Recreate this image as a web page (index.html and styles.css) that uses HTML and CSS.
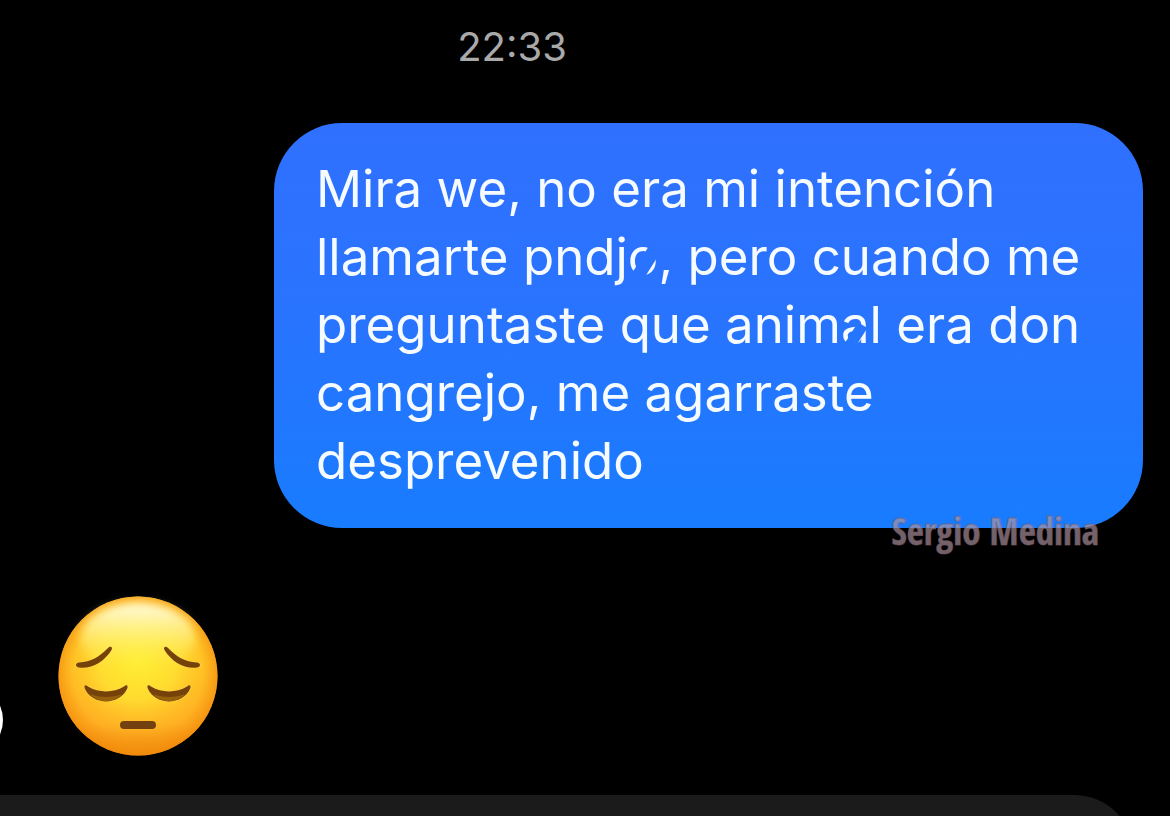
FILE: index.html
```html
<!DOCTYPE html>
<html lang="es">
<head>
<meta charset="utf-8">
<meta name="viewport" content="width=device-width, initial-scale=1">
<title>Chat</title>
<link rel="stylesheet" href="styles.css">
</head>
<body>
<main class="chat">
  <time class="stamp" datetime="22:33">22:33</time>
  <section class="sent">
    <p class="bubble">Mira we, no era mi intención<br>llamarte pndj<span class="cut cut-wide">o</span>, pero cuando me<br>preguntaste que anim<span class="cut cut-low">a</span>l era don<br>cangrejo, me agarraste<br>desprevenido</p>
    <span class="signature">Sergio Medina</span>
  </section>
  <section class="received">
    <span class="avatar"></span>
    <svg class="emoji" viewBox="0 0 160 160" role="img" aria-label="Cara pensativa">
      <defs>
        <linearGradient id="base" x1="0" y1="0" x2="0" y2="1">
          <stop offset="0" stop-color="#ffc22c"/>
          <stop offset=".45" stop-color="#ffbd23"/>
          <stop offset=".8" stop-color="#ffac22"/>
          <stop offset="1" stop-color="#f08b0c"/>
        </linearGradient>
        <radialGradient id="glow" cx=".5" cy=".4" r=".5">
          <stop offset="0" stop-color="#ffee32"/>
          <stop offset=".5" stop-color="#ffe132" stop-opacity=".85"/>
          <stop offset="1" stop-color="#ffc627" stop-opacity="0"/>
        </radialGradient>
        <radialGradient id="rim" cx=".5" cy=".48" r=".52">
          <stop offset=".78" stop-color="#f79a13" stop-opacity="0"/>
          <stop offset="1" stop-color="#f28a0b" stop-opacity=".85"/>
        </radialGradient>
        <linearGradient id="shine" x1="0" y1="0" x2="0" y2="1">
          <stop offset="0" stop-color="#fffce6"/>
          <stop offset=".5" stop-color="#fff68a" stop-opacity=".6"/>
          <stop offset="1" stop-color="#fff03c" stop-opacity="0"/>
        </linearGradient>
        <filter id="soft" x="-20%" y="-20%" width="140%" height="140%"><feGaussianBlur stdDeviation="4"/></filter>
      </defs>
      <circle cx="80" cy="80" r="79.5" fill="url(#base)"/>
      <circle cx="80" cy="80" r="79.5" fill="url(#glow)"/>
      <circle cx="80" cy="80" r="79.5" fill="url(#rim)"/>
      <ellipse cx="80" cy="42" rx="57" ry="35" fill="url(#shine)" filter="url(#soft)"/>
      <g fill="#754309" stroke="#ffd957" stroke-width="1" paint-order="stroke">
        <path d="M50 52C41 61 33 66 21 66.500C17 67 17 71 21 71.500C34 73 46 66 53.500 54C55 51 52.500 49.500 50 52Z"/>
        <path d="M110 52C119 61 127 66 139 66.500C143 67 143 71 139 71.500C126 73 114 66 106.500 54C105 51 107.500 49.500 110 52Z"/>
        <path d="M30 90.500C41 97 55 97 66 90.500C69 88 70.500 90 69 93C61 109.500 35 109.500 27 93C25.500 90 27 88 30 90.500Z"/>
        <path d="M93 90.500C104 97 118 97 129 90.500C132 88 133.500 90 132 93C124 109.500 98 109.500 90 93C88.500 90 90 88 93 90.500Z"/>
      </g>
      <path d="M32 98C40 107.500 56 107.500 64 98C55 102 41 102 32 98ZM95 98C103 107.500 119 107.500 127 98C118 102 104 102 95 98Z" fill="#97610c"/>
      <rect x="62" y="125" width="36" height="8" rx="4" fill="#73400f"/>
    </svg>
  </section>
  <footer class="composer"><input class="field" type="text" aria-label="Mensaje"></footer>
</main>
</body>
</html>
```

FILE: styles.css
```css
* { box-sizing: border-box; }

body {
  margin: 0;
  background: #000;
  font-family: Inter, "Liberation Sans", sans-serif;
}

.chat {
  display: flex;
  flex-direction: column;
  min-height: 100vh;
  overflow: hidden;
}

.stamp {
  padding: 22px 146px 0 0;
  text-align: center;
  font-size: 40px;
  line-height: 50px;
  color: #a9a9a9;
}

.sent {
  position: relative;
  align-self: flex-end;
  width: calc(100% - 301px);
  margin: 51px 27px 0 0;
}

.bubble {
  margin: 0;
  padding: 32px 40px 33px 42px;
  border-radius: 68px;
  background: linear-gradient(#3070ff, #2874ff 50%, #187cff);
  color: #f5fbff;
  font-size: 51px;
  line-height: 68px;
  white-space: nowrap;
}

.cut { position: relative; }

.cut::after {
  content: "";
  position: absolute;
  background: #2a73ff;
  transform: rotate(32deg);
}

.cut-wide::after {
  left: 9px;
  top: 20px;
  width: 13px;
  height: 42px;
}

.cut-low::after {
  left: 9px;
  top: 29px;
  width: 11px;
  height: 27px;
  background: #2675ff;
}

.signature {
  position: absolute;
  right: 44px;
  bottom: -28px;
  font-family: "Open Sans Condensed", "Liberation Sans Narrow", "DejaVu Sans Condensed", sans-serif;
  font-weight: 800;
  font-size: 37px;
  line-height: 50px;
  color: rgb(176 150 160 / 68%);
  -webkit-text-stroke: 1px rgb(120 90 105 / 60%);
}

.received {
  display: flex;
  align-items: flex-end;
  gap: 55px;
  padding-top: 68px;
}

.avatar {
  width: 70px;
  height: 70px;
  margin: 0 0 1px -67px;
  border-radius: 50%;
  background: #fff;
}

.emoji {
  width: 160px;
  height: 160px;
}

.composer {
  height: 21px;
  margin: auto 36px 0 0;
  overflow: hidden;
}

.field {
  display: block;
  width: 100%;
  height: 120px;
  border: 0;
  border-radius: 0 60px 60px 0;
  background: #1b1b1b;
  color: #fff;
  font: inherit;
}
```
